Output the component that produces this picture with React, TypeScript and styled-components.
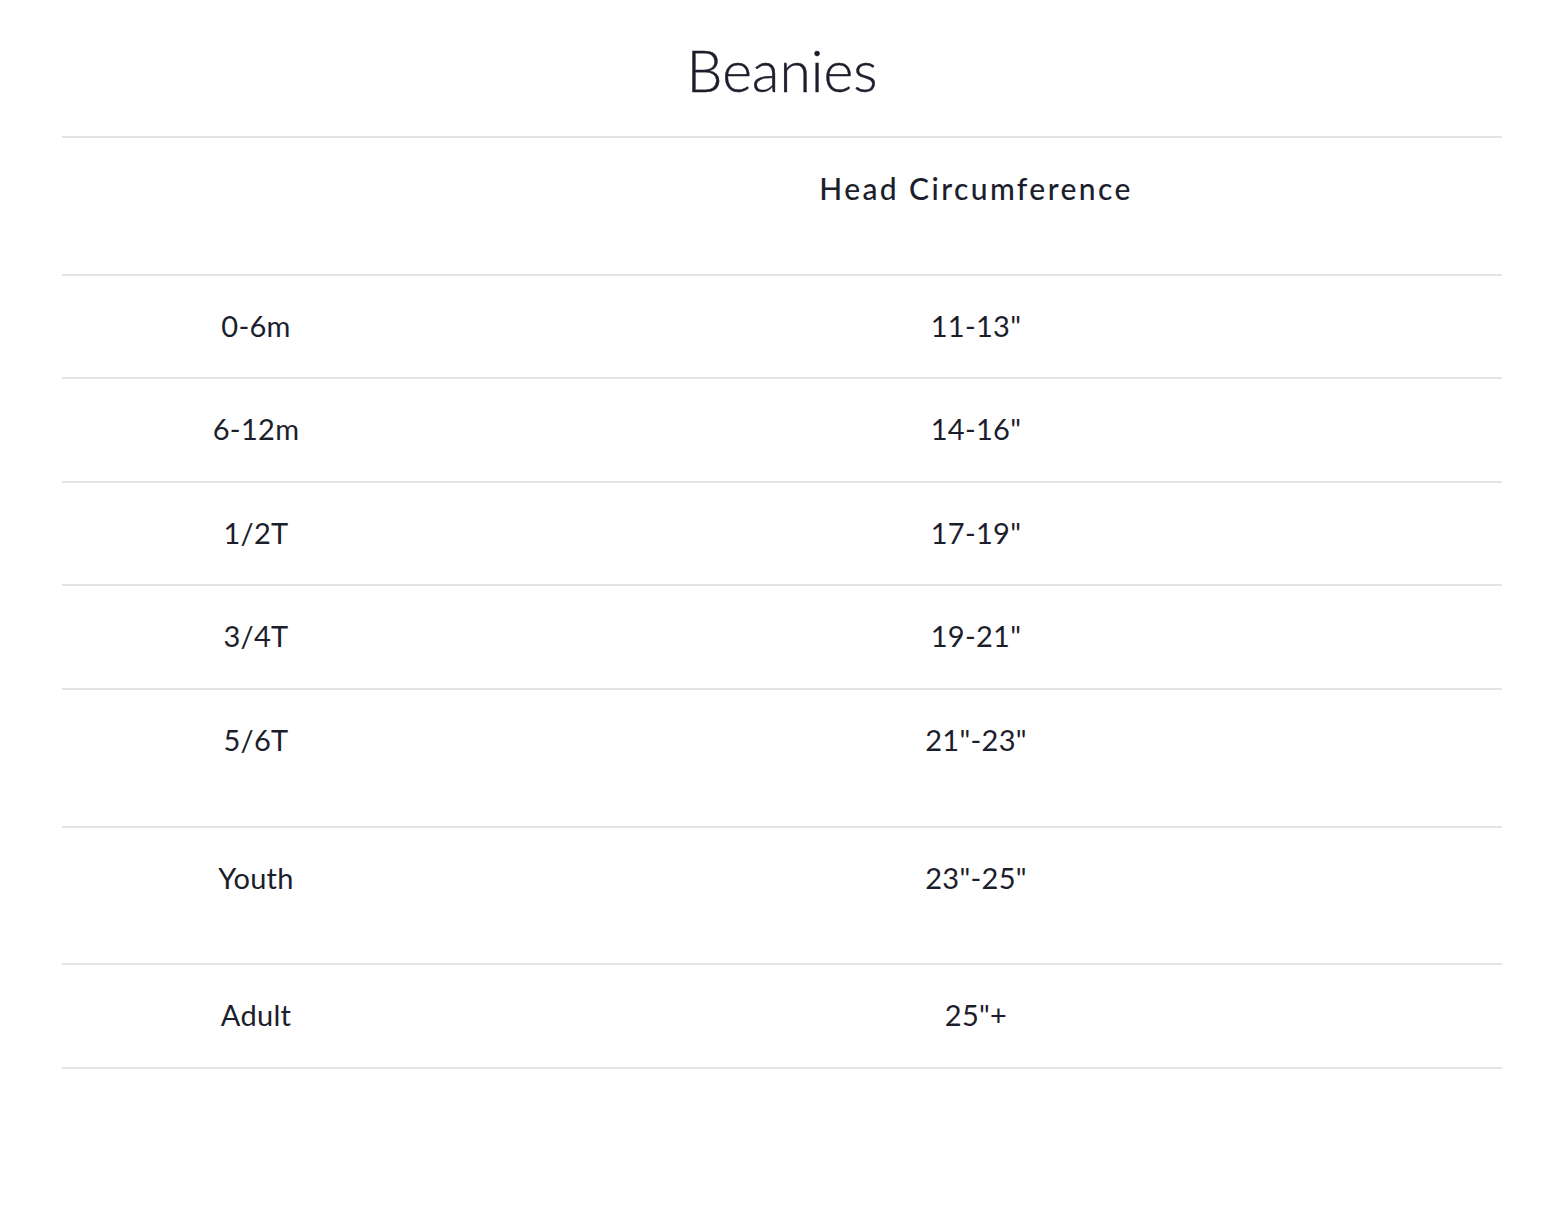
import React from "react";
import styled, { createGlobalStyle } from "styled-components";

const Global = createGlobalStyle`
  html, body { margin: 0; padding: 0; background: #fff; }
  body { font-family: Lato, "Liberation Sans", sans-serif; color: #1c1e2c; }
`;

const Page = styled.div`
  padding: 0 63px 0 62px;
  display: flex;
  flex-direction: column;
`;

const Title = styled.h1`
  margin: 0;
  height: 136px;
  box-sizing: border-box;
  padding-top: 32px;
  text-align: center;
  font-weight: 300;
  font-size: 57px;
  line-height: 76px;
  letter-spacing: 0;
  -webkit-text-stroke: 0.4px #1c1e2c;
`;

const Table = styled.table`
  width: 100%;
  border-collapse: collapse;
  border-top: 2px solid #e4e4e4;
`;

const Row = styled.tr<{ $tall?: boolean }>`
  height: ${(p) => (p.$tall ? 137.6 : 103.6)}px;
  border-bottom: 2px solid #e4e4e4;
`;

const Cell = styled.td<{ $first?: boolean }>`
  width: ${(p) => (p.$first ? "388px" : "auto")};
  vertical-align: top;
  text-align: center;
  padding: 32px 0 0;
  font-size: 29px;
  line-height: 36px;
  letter-spacing: 0.3px;
`;

const HeadCell = styled(Cell).attrs({ as: "th" })`
  font-weight: 500;
  font-size: 30px;
  letter-spacing: 2.4px;
  padding-top: 32px;
`;

const rows: [string, string, boolean][] = [
  ["0-6m", "11-13\"", false],
  ["6-12m", "14-16\"", false],
  ["1/2T", "17-19\"", false],
  ["3/4T", "19-21\"", false],
  ["5/6T", "21\"-23\"", true],
  ["Youth", "23\"-25\"", true],
  ["Adult", "25\"+", false],
];

export default function App() {
  return (
    <>
      <Global />
      <Page>
        <Title>Beanies</Title>
        <Table>
          <thead>
            <Row $tall>
              <HeadCell $first></HeadCell>
              <HeadCell>Head Circumference</HeadCell>
            </Row>
          </thead>
          <tbody>
            {rows.map(([a, b, tall]) => (
              <Row key={a} $tall={tall}>
                <Cell $first>{a}</Cell>
                <Cell>{b}</Cell>
              </Row>
            ))}
          </tbody>
        </Table>
      </Page>
    </>
  );
}
